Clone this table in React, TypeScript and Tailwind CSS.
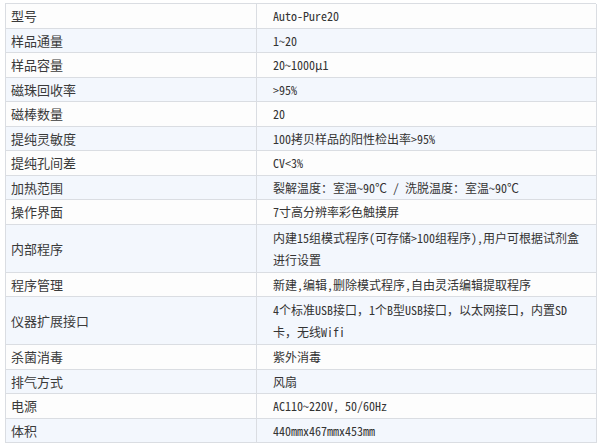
import React from "react";

type Row = { label: string; value: React.ReactNode; h: string; bg: string };

const rows: Row[] = [
  { label: "型号", value: "Auto-Pure20", h: "h-[25px]", bg: "bg-[#fdfdfd]" },
  { label: "样品通量", value: "1~20", h: "h-[24px]", bg: "bg-[#f3f7fd]" },
  { label: "样品容量", value: "20~1000μ1", h: "h-[25px]", bg: "bg-[#fdfdfd]" },
  { label: "磁珠回收率", value: ">95%", h: "h-[24px]", bg: "bg-[#f3f7fd]" },
  { label: "磁棒数量", value: "20", h: "h-[25px]", bg: "bg-[#fdfdfd]" },
  { label: "提纯灵敏度", value: "100拷贝样品的阳性检出率>95%", h: "h-[24px]", bg: "bg-[#f3f7fd]" },
  { label: "提纯孔间差", value: "CV<3%", h: "h-[25px]", bg: "bg-[#fdfdfd]" },
  { label: "加热范围", value: "裂解温度：室温~90℃ / 洗脱温度：室温~90℃", h: "h-[24px]", bg: "bg-[#f3f7fd]" },
  { label: "操作界面", value: "7寸高分辨率彩色触摸屏", h: "h-[25px]", bg: "bg-[#fdfdfd]" },
  {
    label: "内部程序",
    value: (
      <>
        内建15组模式程序(可存储&gt;100组程序),用户可根据试剂盒
        <br />
        进行设置
      </>
    ),
    h: "h-[48px]",
    bg: "bg-[#f3f7fd]",
  },
  { label: "程序管理", value: "新建,编辑,删除模式程序,自由灵活编辑提取程序", h: "h-[24px]", bg: "bg-[#fdfdfd]" },
  {
    label: "仪器扩展接口",
    value: (
      <>
        4个标准USB接口，1个B型USB接口，以太网接口，内置SD
        <br />
        卡，无线Wifi
      </>
    ),
    h: "h-[48px]",
    bg: "bg-[#f3f7fd]",
  },
  { label: "杀菌消毒", value: "紫外消毒", h: "h-[25px]", bg: "bg-[#fdfdfd]" },
  { label: "排气方式", value: "风扇", h: "h-[24px]", bg: "bg-[#f3f7fd]" },
  { label: "电源", value: "AC110~220V, 50/60Hz", h: "h-[25px]", bg: "bg-[#fdfdfd]" },
  { label: "体积", value: "440mmx467mmx453mm", h: "h-[24px]", bg: "bg-[#f3f7fd]" },
];

export default function App() {
  return (
    <div className="w-[600px] h-[447px] bg-white pt-[3px] pl-[5px]">
      <div className="w-[591px] border-t border-l border-[#dadde2]">
        {rows.map((r, i) => (
          <div key={i} className={`grid grid-cols-[251px_340px] ${r.h} ${r.bg}`}>
            <div className="border-r border-b border-[#dadde2] flex items-center pl-[5px] text-[13px] text-[#3a3a3a] whitespace-nowrap font-['Noto_Sans_CJK_SC',sans-serif]">
              {r.label}
            </div>
            <div className="border-r border-b border-[#dadde2] flex items-center pl-[16px] text-[12px] leading-[22px] text-[#333333] whitespace-nowrap font-['Noto_Sans_Mono_CJK_SC','Noto_Sans_CJK_SC',monospace]">
              <div>{r.value}</div>
            </div>
          </div>
        ))}
      </div>
    </div>
  );
}
